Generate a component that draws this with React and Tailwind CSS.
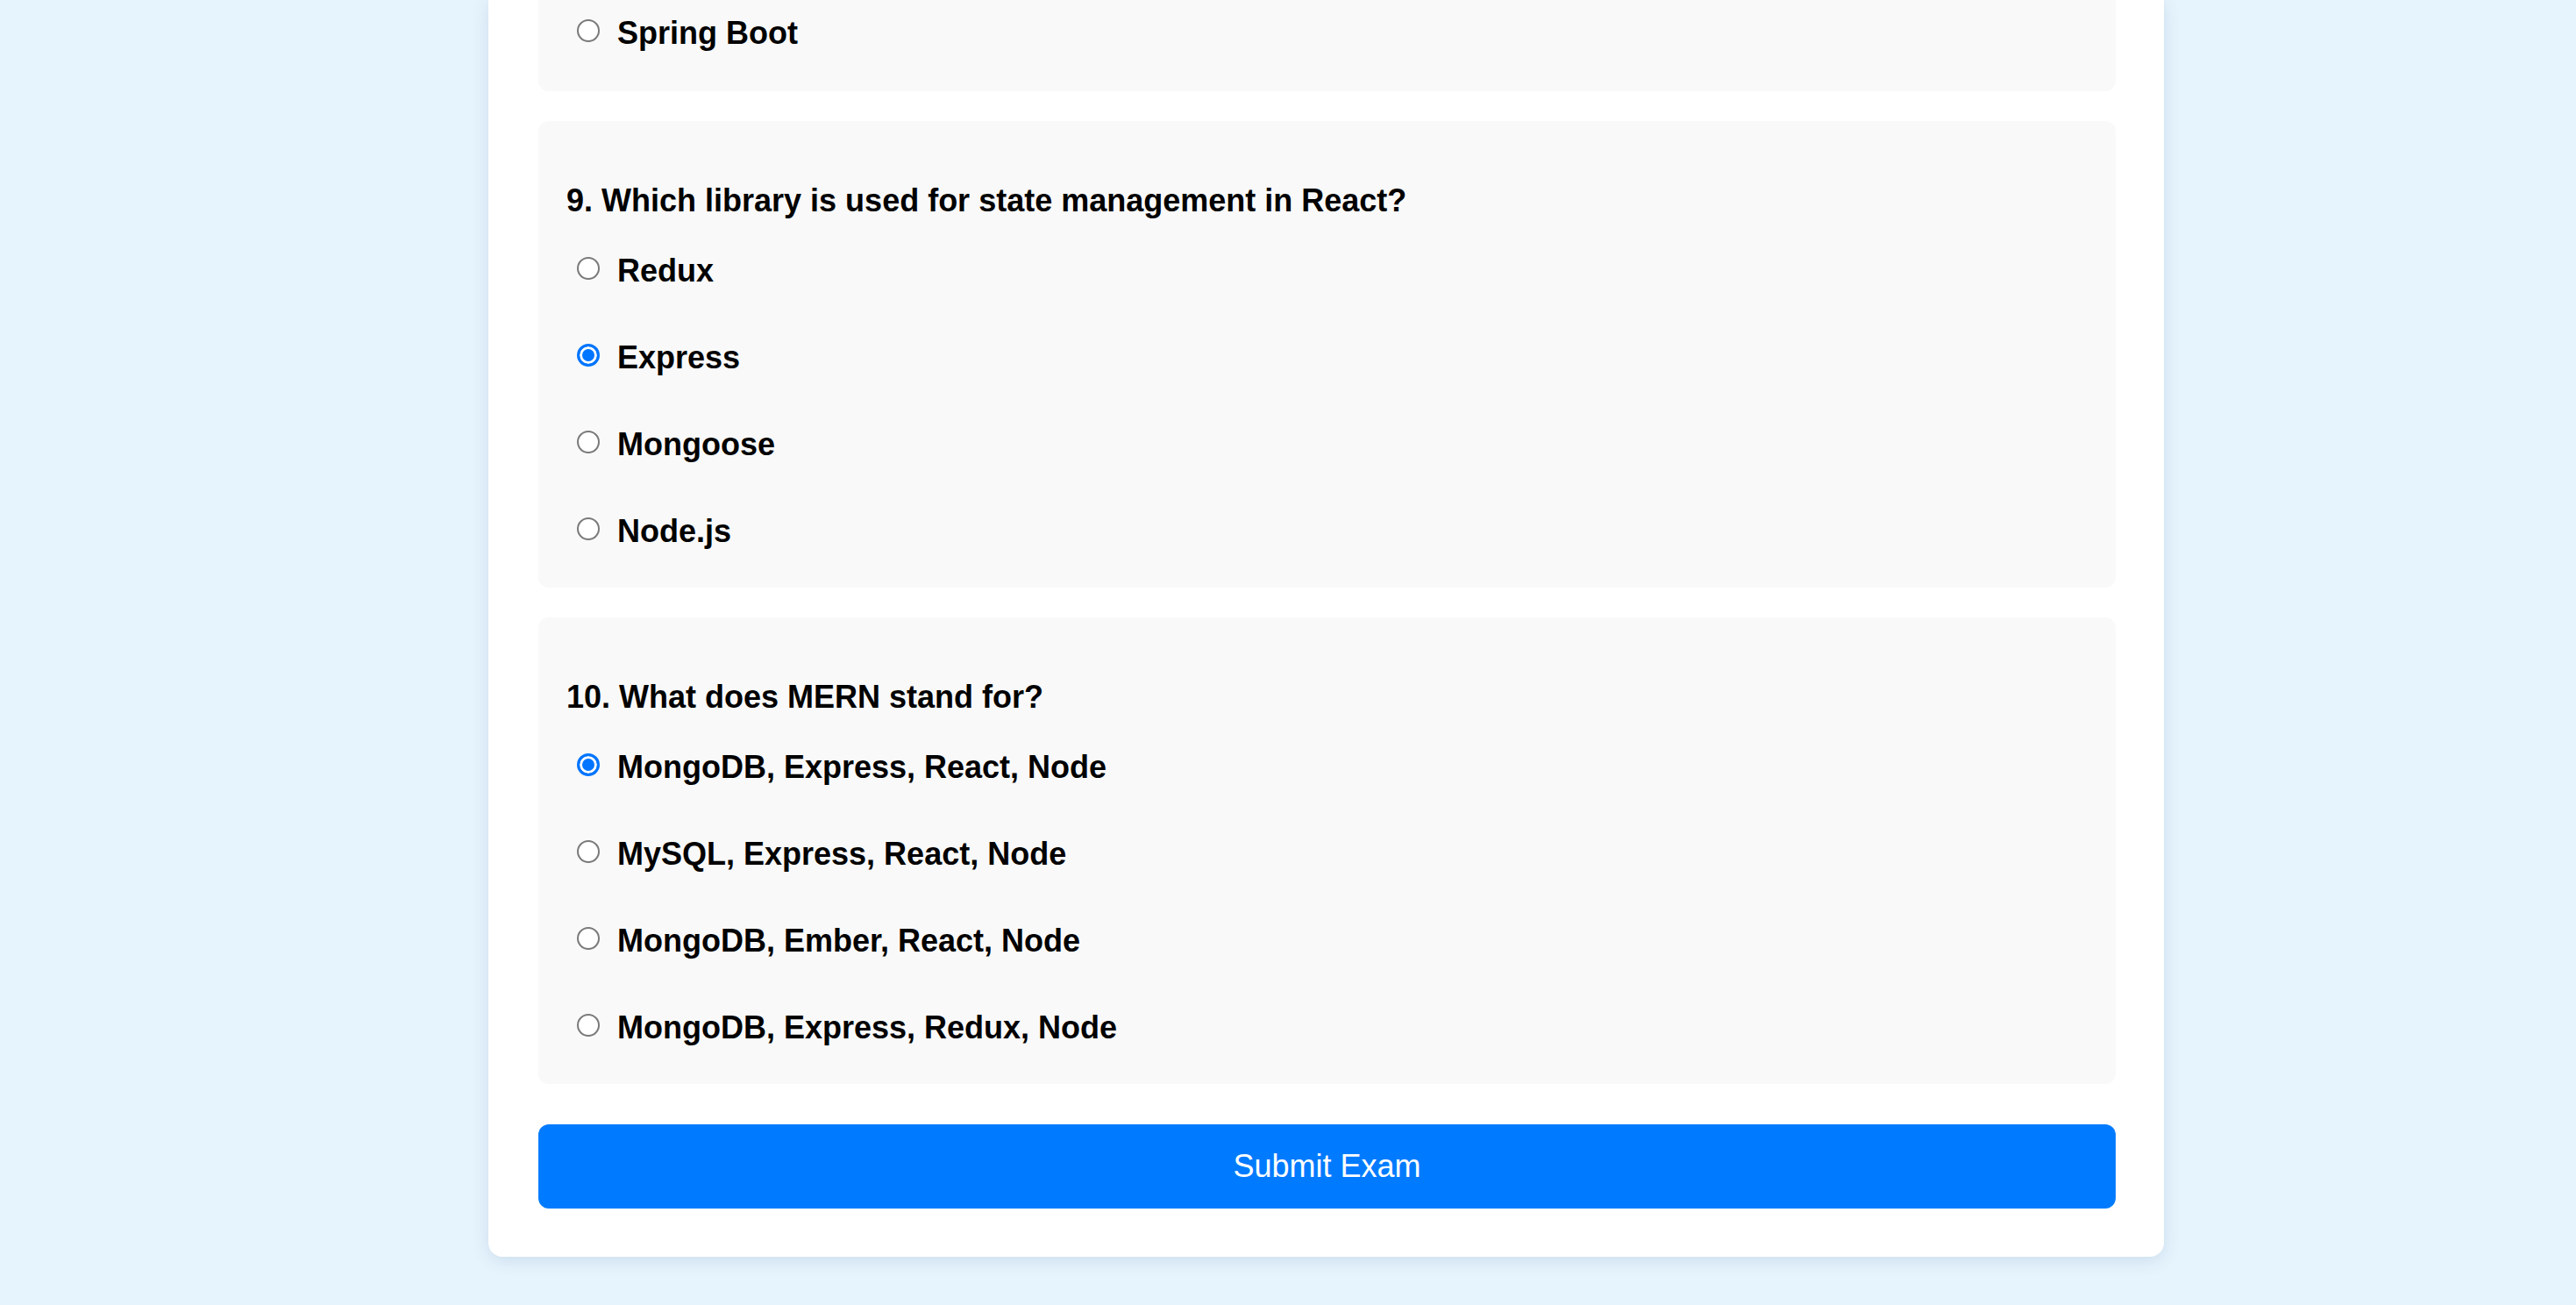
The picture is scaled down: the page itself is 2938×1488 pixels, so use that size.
import { useState } from 'react';

const questions = [
  {
    no: 9,
    text: 'Which library is used for state management in React?',
    options: ['Redux', 'Express', 'Mongoose', 'Node.js'],
  },
  {
    no: 10,
    text: 'What does MERN stand for?',
    options: [
      'MongoDB, Express, React, Node',
      'MySQL, Express, React, Node',
      'MongoDB, Ember, React, Node',
      'MongoDB, Express, Redux, Node',
    ],
  },
];

function Option({ name, label, checked, onPick }) {
  return (
    <label className="flex items-center h-[40px] cursor-pointer">
      <input
        type="radio"
        name={name}
        checked={checked}
        onChange={onPick}
        className="appearance-none shrink-0 m-0 mb-[6px] ml-[12px] w-[26px] h-[26px] rounded-full bg-white border-2 border-[#7a7a7a] checked:border-[3px] checked:border-[#0075ff] checked:bg-[#0075ff] checked:shadow-[inset_0_0_0_3px_white]"
      />
      <span className="ml-[20px] text-[36px] leading-[40px] font-bold text-black">{label}</span>
    </label>
  );
}

function QuestionCard({ q, answer, setAnswer }) {
  return (
    <div className="bg-[#f9f9f9] rounded-[12px] pl-[32px] pt-[71px] pb-[44px]">
      <h3 className="text-[36px] leading-[40px] font-bold text-black mb-[40px]">
        {q.no}. {q.text}
      </h3>
      <div className="flex flex-col gap-[59px]">
        {q.options.map((opt, i) => (
          <Option
            key={opt}
            name={`q${q.no}`}
            label={opt}
            checked={answer === i}
            onPick={() => setAnswer(i)}
          />
        ))}
      </div>
    </div>
  );
}

export default function App() {
  const [answers, setAnswers] = useState({ 8: 99, 9: 1, 10: 0 });

  const pick = (no) => (i) => setAnswers((a) => ({ ...a, [no]: i }));

  return (
    <div className="h-[1488px] overflow-hidden bg-[#e6f4fd] font-['Liberation_Sans',Arial,sans-serif]">
      <div className="ml-[557px] w-[1911px] bg-white rounded-b-[16px] shadow-[0_4px_20px_rgba(0,60,110,0.12)] pl-[57px] pr-[55px] pb-[55px]">
        <div className="flex flex-col gap-[34px]">
          {/* tail of question 8, scrolled past */}
          <div className="bg-[#f9f9f9] rounded-b-[12px] pl-[32px] pt-[18px] pb-[46px]">
            <Option
              name="q8"
              label="Spring Boot"
              checked={answers[8] === 3}
              onPick={() => pick(8)(3)}
            />
          </div>
          {questions.map((q) => (
            <QuestionCard key={q.no} q={q} answer={answers[q.no]} setAnswer={pick(q.no)} />
          ))}
        </div>
        <button className="mt-[46px] w-full h-[96px] rounded-[12px] bg-[#007bff] text-white text-[36px]">
          Submit Exam
        </button>
      </div>
    </div>
  );
}
